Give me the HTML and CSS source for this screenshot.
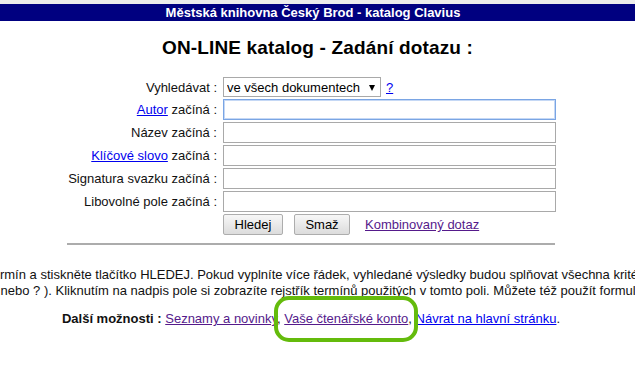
FILE: index.html
```html
<!DOCTYPE html>
<html lang="cs">
<head>
    <meta charset="UTF-8">
    <meta name="viewport" content="width=device-width, initial-scale=1.0">
    <title>ON-LINE katalog - Zadání dotazu</title>
    <link rel="stylesheet" href="styles.css">
</head>
<body>

    <!-- Header bar -->
    <div class="topbar">Městská knihovna Český Brod - katalog Clavius</div>

    <h1 class="title">ON-LINE katalog - Zadání dotazu :</h1>

    <!-- Search form -->
    <form class="search">
        <label class="label" for="druh">Vyhledávat :</label>
        <div class="field">
            <span class="select-wrap">
                <select id="druh" class="select">
                    <option>ve všech dokumentech</option>
                    <option>v knihách</option>
                    <option>v periodikách</option>
                </select>
            </span>
            <a href="#" class="help">?</a>
        </div>

        <label class="label" for="autor"><a href="#">Autor</a> začíná :</label>
        <input type="text" id="autor" class="text focused">

        <label class="label" for="nazev">Název začíná :</label>
        <input type="text" id="nazev" class="text">

        <label class="label" for="klic"><a href="#">Klíčové slovo</a> začíná :</label>
        <input type="text" id="klic" class="text">

        <label class="label" for="sig">Signatura svazku začíná :</label>
        <input type="text" id="sig" class="text">

        <label class="label" for="pole">Libovolné pole začíná :</label>
        <input type="text" id="pole" class="text">

        <span></span>
        <div class="buttons">
            <button type="submit" class="btn btn-search">Hledej</button>
            <button type="reset" class="btn btn-clear">Smaž</button>
            <a href="#" class="visited combined">Kombinovaný dotaz</a>
        </div>
    </form>

    <hr class="divider">

    <!-- Help text -->
    <div class="help-text">
        <div class="line line-1">Zadejte hledaný termín a stiskněte tlačítko HLEDEJ. Pokud vyplníte více řádek, vyhledané výsledky budou splňovat všechna kritéria.</div>
        <div class="line line-2">Lze použít zástupné znaky (* nebo ? ). Kliknutím na nadpis pole si zobrazíte rejstřík termínů použitých v tomto poli. Můžete též použít formulář pro kombinovaný dotaz.</div>
    </div>

    <div class="options">
        <b>Další možnosti :</b>
        <a href="#" class="visited">Seznamy a novinky</a>,
        <span class="marked"><a href="#" class="visited">Vaše čtenářské konto</a></span>,
        <a href="#">Návrat na hlavní stránku</a>.
    </div>

</body>
</html>
```

FILE: styles.css
```css
html, body {
    height: 100%;
}
body {
    margin: 0;
    padding: 0;
    font-family: "Liberation Sans", Arial, sans-serif;
    font-size: 13px;
    color: #111;
    background: #fff;
    overflow: hidden;
}
a {
    color: #0000ee;
}
a.visited {
    color: #551a8b;
}
.topbar {
    border-top: 4px solid #ececec;
    background-color: #000080;
    color: white;
    font-weight: bold;
    text-align: center;
    height: 17px;
    line-height: 17px;
    padding-right: 9px;
}
.title {
    font-size: 19px;
    font-weight: bold;
    text-align: center;
    line-height: 22px;
    letter-spacing: 0.15px;
    margin: 16px 0 18px 0;
    color: #000;
}
.search {
    display: grid;
    grid-template-columns: 150px 333px;
    column-gap: 6px;
    row-gap: 2px;
    align-items: center;
    margin-left: 67px;
}
.label {
    text-align: right;
    white-space: nowrap;
}
.field {
    display: flex;
    align-items: center;
    gap: 5px;
}
.select-wrap {
    position: relative;
    display: inline-block;
}
.select-wrap::after {
    content: "";
    position: absolute;
    right: 6px;
    top: 8px;
    border-left: 3.5px solid transparent;
    border-right: 3.5px solid transparent;
    border-top: 6px solid #000;
    pointer-events: none;
}
.select {
    appearance: none;
    -webkit-appearance: none;
    width: 158px;
    height: 20px;
    padding: 0 0 0 3px;
    border: 1px solid #a9a9a9;
    border-radius: 0;
    background: white;
    font-family: inherit;
    font-size: 13px;
    color: #000;
}
.text {
    box-sizing: border-box;
    width: 333px;
    height: 21px;
    margin: 0;
    border: 1px solid #a9a9a9;
    padding: 1px 3px;
    font-family: inherit;
    font-size: 13px;
}
.text.focused {
    border-color: #7aa5e4;
    box-shadow: inset 0 0 0 1px #c5d8f5;
}
.buttons {
    display: flex;
    align-items: center;
}
.btn {
    box-sizing: border-box;
    height: 21px;
    padding: 0;
    border: 1px solid #adadad;
    border-radius: 2px;
    background: linear-gradient(#f7f7f7, #dcdcdc);
    font-family: inherit;
    font-size: 13px;
    color: #000;
}
.btn-search {
    width: 60px;
}
.btn-clear {
    width: 56px;
    margin-left: 11px;
}
.combined {
    margin-left: 15px;
}
.divider {
    width: 488px;
    margin: 8px 0 0 67px;
    height: 0;
    border: none;
    border-top: 2px solid #acacac;
}
.help-text {
    margin-top: 22px;
    line-height: 16px;
    white-space: nowrap;
}
.line-1 {
    text-indent: -107px;
}
.line-2 {
    text-indent: -170px;
}
.options {
    width: 622px;
    margin-top: 12px;
    padding-bottom: 40px;
    text-align: center;
    line-height: 16px;
    white-space: nowrap;
}
/* green highlight round the reader account link */
.marked {
    position: relative;
    display: inline-block;
}
.marked::after {
    content: "";
    position: absolute;
    left: -10px;
    right: -10px;
    top: -15px;
    bottom: -15px;
    border: 4px solid #64bb0c;
    border-radius: 15px;
    pointer-events: none;
}
```
